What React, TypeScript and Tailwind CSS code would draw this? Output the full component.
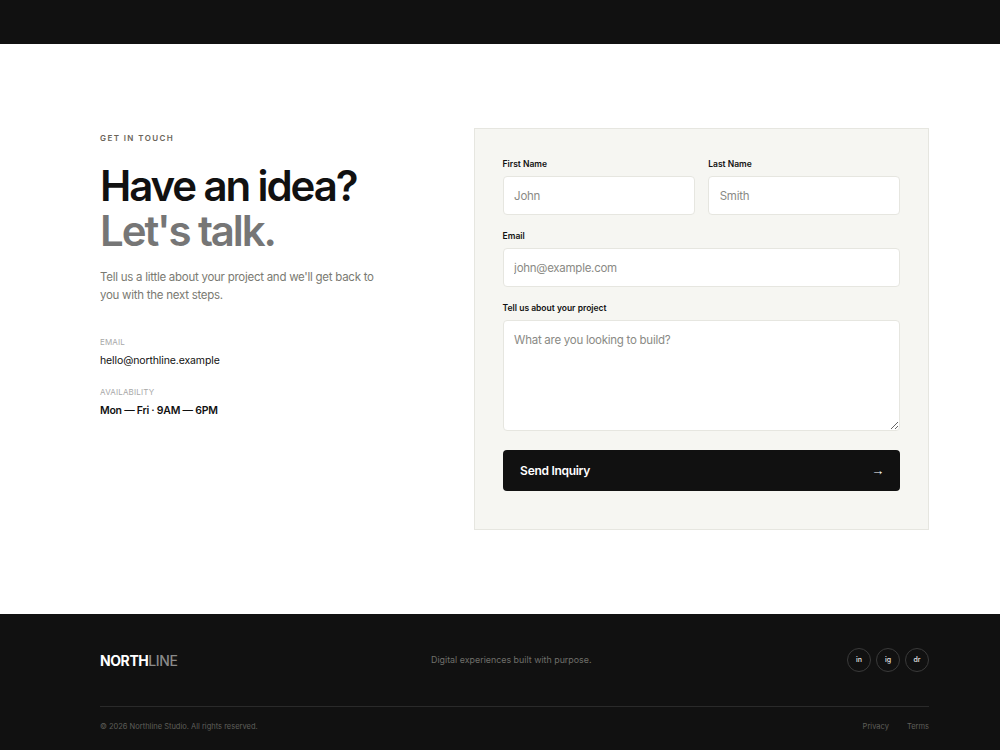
const inputCls =
  "block w-full h-[39px] px-[10.5px] bg-white border border-[#e6e6e0] rounded-[4px] text-[11.5px] tracking-[-0.023em] placeholder:text-[#8a8a85]";
const labelCls = "block text-[8.5px] leading-[14px] font-semibold";

export default function App() {
  return (
    <div className="min-h-[750px] bg-white font-['Inter','Liberation_Sans',sans-serif] text-[#111111] flex flex-col">
      <header className="h-[44px] bg-[#111111] shrink-0" />
      <main className="flex justify-between pl-[100px] pr-[71px] pt-[84px] pb-[84px]">
        <section className="w-[300px] pt-[4px]">
          <p className="text-[8px] leading-[12px] font-semibold tracking-[0.175em] text-[#6b6459]">GET IN TOUCH</p>
          <h1 className="mt-[19px] text-[42px] leading-[45px] font-semibold tracking-[-0.05em]">
            Have an idea?
            <br />
            <span className="text-[#767676]">Let's talk.</span>
          </h1>
          <p className="mt-[15px] w-[290px] text-[11.5px] leading-[18px] tracking-[-0.023em] text-[#7a7a72]">
            Tell us a little about your project and we'll get back to you with the next steps.
          </p>
          <p className="mt-[32px] text-[8px] leading-[12px] tracking-[0.02em] text-[#a8a8a8]">EMAIL</p>
          <p className="mt-[5px] text-[10.5px] leading-[16px] tracking-[-0.011em]">hello@northline.example</p>
          <p className="mt-[17px] text-[8px] leading-[12px] tracking-[0.02em] text-[#a8a8a8]">AVAILABILITY</p>
          <p className="mt-[5px] text-[10.5px] leading-[16px] font-semibold tracking-[-0.024em]">Mon — Fri · 9AM — 6PM</p>
        </section>
        <form className="w-[455.4px] bg-[#f6f6f2] border border-[#e6e6e0] pt-[28px] px-[28px] pb-[38px] flex flex-col">
          <div className="flex gap-[12.8px]">
            <label className="w-[192.8px] block">
              <span className={labelCls}>First Name</span>
              <input placeholder="John" className={`mt-[5px] ${inputCls}`} />
            </label>
            <label className="flex-1 block">
              <span className={labelCls}>Last Name</span>
              <input placeholder="Smith" className={`mt-[5px] ${inputCls}`} />
            </label>
          </div>
          <label className="block mt-[14px]">
            <span className={labelCls}>Email</span>
            <input placeholder="john@example.com" className={`mt-[5px] ${inputCls}`} />
          </label>
          <label className="block mt-[14px]">
            <span className={labelCls}>Tell us about your project</span>
            <textarea
              placeholder="What are you looking to build?"
              className="mt-[5px] block w-full h-[111px] px-[10.5px] py-[11px] bg-white border border-[#e6e6e0] rounded-[4px] text-[11.5px] tracking-[-0.023em] leading-[16px] placeholder:text-[#8a8a85]"
            />
          </label>
          <button
            type="button"
            className="mt-[19px] h-[41px] w-full bg-[#111111] rounded-[4px] text-white flex items-center justify-between pl-[17.5px] pr-[16px] text-[12px] tracking-[-0.024em] font-semibold"
          >
            <span>Send Inquiry</span>
            <span className="text-[13px] font-normal font-['Liberation_Sans',sans-serif]">→</span>
          </button>
        </form>
      </main>
      <footer className="h-[136px] bg-[#111111] pl-[100px] pr-[71px] pt-[34px]">
        <div className="flex items-center h-[24px]">
          <div className="w-[331px] pt-[1px] text-[14px] font-bold tracking-[-0.03em] text-white">
            NORTH<span className="font-medium text-[#8a8a8a]">LINE</span>
          </div>
          <p className="text-[8.9px] text-[#6f6f6a]">Digital experiences built with purpose.</p>
          <div className="ml-auto flex gap-[5px]">
            {["in", "ig", "dr"].map((t) => (
              <span
                key={t}
                className="w-[24px] h-[24px] rounded-full border border-[#3a3a3a] flex items-center justify-center text-[7px] font-medium text-[#e6e6e6]"
              >
                {t}
              </span>
            ))}
          </div>
        </div>
        <div className="mt-[34px] border-t border-[#2a2a2a] pt-[14px] flex justify-between text-[7.5px] leading-[12px] text-[#5f5f5a]">
          <span>© 2026 Northline Studio. All rights reserved.</span>
          <span className="flex gap-[18px]">
            <span>Privacy</span>
            <span>Terms</span>
          </span>
        </div>
      </footer>
    </div>
  );
}
